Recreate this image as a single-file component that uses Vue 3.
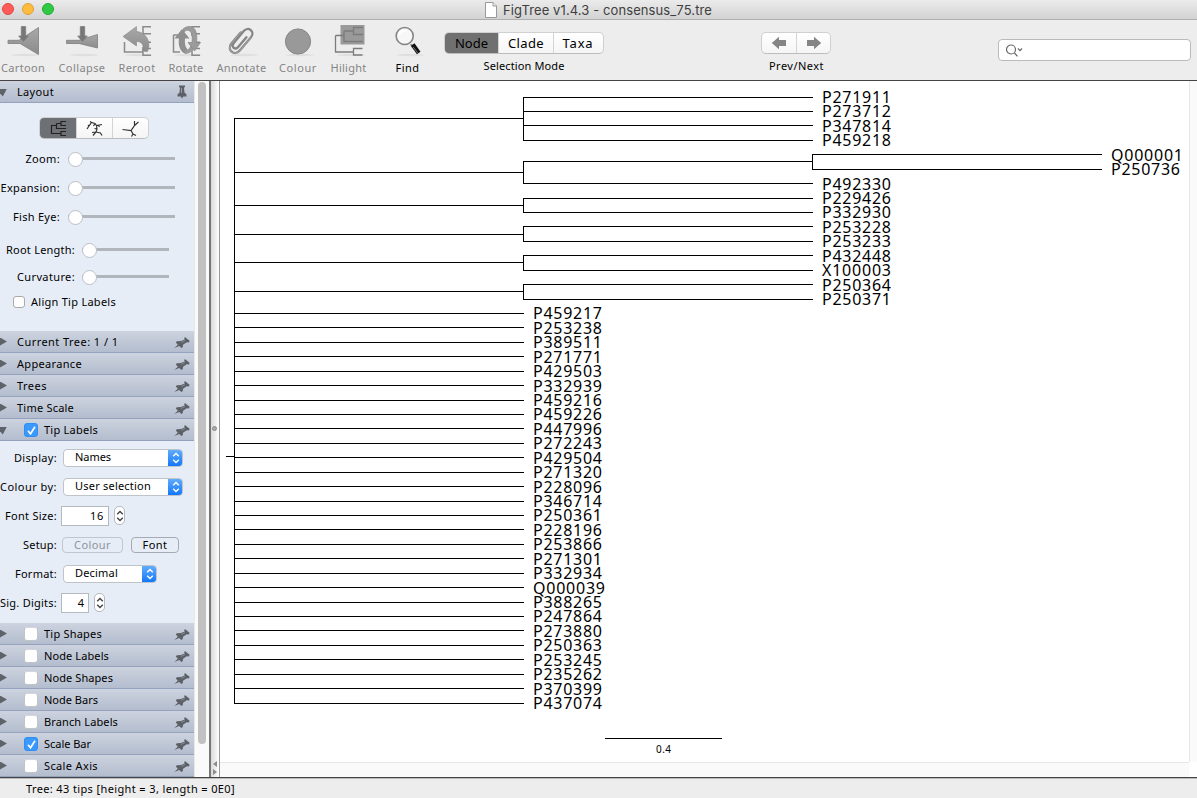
<script setup>
// Spreads a label's letters so that it takes up the given width in pixels.
const vFit = {
  mounted(el, { value }) {
    if (!value) return
    const width = el.getBoundingClientRect().width
    el.style.letterSpacing = (value - width) / el.textContent.length + 'px'
  },
}

const tools = [
  { name: 'Cartoon', w: 44 },
  { name: 'Collapse', w: 47 },
  { name: 'Reroot', w: 37 },
  { name: 'Rotate', w: 35 },
  { name: 'Annotate', w: 50 },
  { name: 'Colour', w: 38 },
  { name: 'Hilight', w: 36 },
  { name: 'Find', w: 24, on: true },
]

const closedTop = [
  { name: 'Current Tree: 1 / 1', w: 101.5 },
  { name: 'Appearance', w: 65 },
  { name: 'Trees', w: 30 },
  { name: 'Time Scale', w: 57 },
]
const closedBottom = [
  { name: 'Tip Shapes', w: 58 },
  { name: 'Node Labels', w: 65 },
  { name: 'Node Shapes', w: 69 },
  { name: 'Node Bars', w: 54 },
  { name: 'Branch Labels', w: 74 },
  { name: 'Scale Bar', w: 47, on: true },
  { name: 'Scale Axis', w: 54 },
]

const tips = (
  'P271911 P273712 P347814 P459218 Q000001 P250736 P492330 P229426 P332930 P253228 P253233 ' +
  'P432448 X100003 P250364 P250371 P459217 P253238 P389511 P271771 P429503 P332939 P459216 ' +
  'P459226 P447996 P272243 P429504 P271320 P228096 P346714 P250361 P228196 P253866 P271301 ' +
  'P332934 Q000039 P388265 P247864 P273880 P250363 P253245 P235262 P370399 P437074'
).split(' ')

const levels = [234, 523, 812, 1101]
const labelX = [0, 533, 822, 1111]
const depth = (i) => (i === 4 || i === 5 ? 3 : i < 15 ? 2 : 1)
const rawY = (i) => 97.02 + i * 14.43
const snap = (y) => Math.floor(y) + 0.5

const labels = tips.map((name, i) => ({
  name,
  x: labelX[depth(i)],
  y: Math.round(rawY(i) + 5.9),
  w: name[0] === 'Q' ? 72 : 69,
}))

const mid = (a, b) => (a + b) / 2
const pair = mid(rawY(4), rawY(5))
const clades = [
  { top: rawY(0), bottom: rawY(3) },
  { top: pair, bottom: rawY(6) },
  { top: rawY(7), bottom: rawY(8) },
  { top: rawY(9), bottom: rawY(10) },
  { top: rawY(11), bottom: rawY(12) },
  { top: rawY(13), bottom: rawY(14) },
]
const across = (level, y) => `M${levels[level - 1]} ${snap(y)}H${levels[level] + 1}`
const down = (level, a, b) => `M${levels[level] + 0.5} ${snap(a) - 0.5}V${snap(b) + 0.5}`
const branches = [
  ...tips.map((_, i) => across(depth(i), rawY(i))),
  ...clades.map((c) => across(1, mid(c.top, c.bottom)) + down(1, c.top, c.bottom)),
  across(2, pair),
  down(2, rawY(4), rawY(5)),
  down(0, mid(rawY(0), rawY(3)), rawY(42)),
  'M226 456.5H234',
].join('')
</script>

<template>
  <div class="window">
    <svg width="0" height="0" class="defs">
      <defs>
        <linearGradient id="g" x1="0" y1="0" x2="0" y2="1">
          <stop offset="0" stop-color="#a9a9a9" />
          <stop offset="1" stop-color="#8b8b8b" />
        </linearGradient>
        <symbol id="pin" viewBox="0 0 16 13">
          <path d="M0.300 12L3.800 8.800 1.800 6.500 2.800 5.200 7 5 10.800 3.400 10 2 11.200 1.200 15.600 4.800 15 6.400 12.800 6.200 9 8.800 8.800 11 7.400 12 5.200 9.900Z" fill="#5d6167" />
          <path d="M7.200 6.400L11 4.700" stroke="#8a9098" stroke-width=".9" />
        </symbol>
        <symbol id="updown" viewBox="0 0 8 12">
          <path d="M1.2 4.2L4 1.5 6.8 4.2M1.2 7.8L4 10.5 6.8 7.8" fill="none" stroke="currentColor" stroke-width="1.4" />
        </symbol>
      </defs>
    </svg>

    <header class="titlebar">
      <div class="lights"><i class="red"></i><i class="yellow"></i><i class="green"></i></div>
      <div class="title">
        <svg width="12" height="16" viewBox="0 0 12 16">
          <path d="M.5.5H8L11.5 4V15.5H.5Z" fill="#fff" stroke="#999" />
          <path d="M8 .5V4H11.5" fill="#eee" stroke="#999" />
        </svg>
        <span v-fit="209">FigTree v1.4.3 - consensus_75.tre</span>
      </div>
    </header>

    <div class="toolbar">
      <div v-for="t in tools" :key="t.name" class="tool" :class="{ on: t.on }">
        <svg width="36" height="36" viewBox="0 0 36 36" fill="none">
          <ellipse cx="20" cy="32" rx="14" ry="1.2" fill="#dfdfdf" />
          <g v-if="t.name === 'Cartoon'" fill="url(#g)" stroke="#7f7f7f" stroke-width=".8">
            <path d="M3 17.3H14L33.5 4.5V31.5L15 20.5H3Z" />
            <path d="M16.3 3.5H20.7V13H23.3L18.5 18.5 13.7 13H16.3Z" fill="#777" />
          </g>
          <g v-else-if="t.name === 'Collapse'" fill="url(#g)" stroke="#7f7f7f" stroke-width=".8">
            <path d="M2.5 17.3H15L33.5 11.5V25L15 20.5H2.5Z" />
            <path d="M16.3 3.5H20.7V13H23.3L18.5 18.5 13.7 13H16.3Z" fill="#777" />
          </g>
          <g v-else-if="t.name === 'Reroot'">
            <path d="M5.5 19V29H24M32 3.8H24V13M24 10.8H32M27 19.3H32M24 24V32.2H32M26 25.5H32" stroke="#8a8a8a" stroke-width="1.5" />
            <path d="M4 13.5L17.5 3.5V8.5C26 9 33 18 28.500 28.500 25 29 22 27 24 25 24.500 21 22 18.500 17.5 18.5V23Z" fill="url(#g)" stroke="#888" stroke-width=".6" />
          </g>
          <g v-else-if="t.name === 'Rotate'">
            <path d="M5.500 12V29H12M5.500 12H12M32 3.800H24V13M24 10.800H32M27 19.300H32M24 24V32.200H32M26 25.500H32" stroke="#8a8a8a" stroke-width="1.5" />
            <path d="M11 15.500H6.500L14 6 21.500 15.500H17C16.500 21 17.500 25.500 21 27.500L18 31C11.500 28.500 10 22 11 15.500Z" fill="#8f8f8f" />
            <path d="M18 31C23 30 25.500 27 26.500 24L23 21.500C22 25 20 27 16.500 27.500Z" fill="#9b9b9b" />
            <path d="M15 6C19 2.500 25 2.500 27.500 7.500 29 11 29 16 28.500 19.500H32.500L26.500 28 20 19.500H24C24.500 15 24.500 9 21 7.500 19 6.800 17.500 7.500 16 9Z" fill="#9b9b9b" stroke="#858585" stroke-width=".7" />
          </g>
          <g v-else-if="t.name === 'Annotate'" transform="translate(-2 0) rotate(40 18 18)" stroke-linecap="round">
            <path d="M13 11V25.500C13 33.500 24 33.500 24 25.500V8C24 1 14.500 1 14.500 8V23.500C14.500 28.500 20.500 28.500 20.500 23.500V11" stroke="#858585" stroke-width="2.300" />
            <path d="M13 11V25.500C13 33.500 24 33.500 24 25.500V8" stroke="#b0b0b0" stroke-width=".7" />
          </g>
          <circle v-else-if="t.name === 'Colour'" cx="18" cy="18.500" r="12.600" fill="#999" stroke="#878787" />
          <g v-else-if="t.name === 'Hilight'">
            <rect x="9.500" y="2" width="24" height="19.500" fill="#9a9a9a" />
            <path d="M4.500 12.500V29H14M4.500 12.500H13M13 8V18.500H31.500M13 8H22.500M32 4.500H22.500V11.500H32M14 29H22.500M31.500 25.500H22.500V32H31.500" stroke="#7c7c7c" stroke-width="1.300" />
          </g>
          <g v-else transform="translate(-.8 0)">
            <path d="M21.500 21L24 25" stroke="#999" stroke-width="2" />
            <path d="M23.500 21.500L29.500 30" stroke="#111" stroke-width="4.400" />
            <path d="M24 24L28.500 30" stroke="#777" stroke-width="1" />
            <circle cx="15.500" cy="13" r="8.500" fill="#f7f7f7" stroke="#858585" stroke-width="1.600" />
            <path d="M10 12C10.500 8.500 14 7 17 8" stroke="#fff" stroke-width="2" />
          </g>
        </svg>
        <span v-fit="t.w">{{ t.name }}</span>
      </div>

      <div class="group mode">
        <div class="segs">
          <b class="sel"><span v-fit="33">Node</span></b>
          <b><span v-fit="36">Clade</span></b>
          <b><span v-fit="31">Taxa</span></b>
        </div>
        <span v-fit="81">Selection Mode</span>
      </div>

      <div class="group nav">
        <div class="segs">
          <b><svg width="16" height="14" viewBox="0 0 16 14"><path d="M.8 7L8 .8V4H15V10H8V13.200Z" fill="#858585" /></svg></b>
          <b><svg width="16" height="14" viewBox="0 0 16 14"><path d="M15.200 7L8 .8V4H1V10H8V13.200Z" fill="#858585" /></svg></b>
        </div>
        <span v-fit="55">Prev/Next</span>
      </div>

      <div class="search">
        <svg width="18" height="14" viewBox="0 0 18 14" fill="none" stroke="#666" stroke-width="1.200">
          <circle cx="5" cy="5.500" r="4.500" />
          <path d="M8.500 9L11.500 12.300M12 4.500L14 6.600 16 4.500" />
        </svg>
      </div>
    </div>

    <main class="body">
      <aside class="panels">
        <div class="head">
          <i class="tri open"></i>
          <span v-fit="37" class="name">Layout</span>
          <svg class="pushpin" width="10" height="14" viewBox="0 0 10 14">
            <path d="M2 .5H8V2L7 2.800 7.500 7.500 9.500 9.500V11.500H6.300L5 13.500 3.700 11.500H.5V9.500L2.500 7.500 3 2.800 2 2Z" fill="#5d6167" />
            <path d="M4.500 3V8" stroke="#969ca4" />
          </svg>
        </div>
        <div class="content layout">
          <div class="segs views">
            <b class="sel">
              <svg width="18" height="17" viewBox="0 0 18 17" fill="none" stroke="#222" stroke-width="1.200"><path d="M7.500 5.500H2.500V13.500H11.500M7.500 3.500V8.500H17M7.500 3.500H12M17 1.500H12V5.500H17M17 11.500H12V15.500H17" /></svg>
            </b>
            <b>
              <svg width="18" height="17" viewBox="0 0 18 17" fill="none" stroke="#333" stroke-width="1.200"><path d="M1 9L3 6 5.500 2.500 9 3.500 10.500 5.500 16 4.500M3 6L2 5M5.500 2.500L4 1.500M12 5L13.500 7M9 3.500L7.500 6M10.500 5.500L11 9 10 12 7 15.500M10 12L14.500 13 16 15.500M10 12L6 12.500M11 9L8.500 8.500" /></svg>
            </b>
            <b>
              <svg width="18" height="17" viewBox="0 0 18 17" fill="none" stroke="#333" stroke-width="1.200"><path d="M.5 9.500L9 10.500 12.500 5.500V1M12.500 5.500L16.500 2M9 10.500L11 14 9.500 16.500M11 14L14 15.500" /></svg>
            </b>
          </div>
          <div class="row slide a"><label><span v-fit="34.500">Zoom:</span></label><i class="slider"></i></div>
          <div class="row slide a"><label><span v-fit="59.500">Expansion:</span></label><i class="slider"></i></div>
          <div class="row slide a"><label><span v-fit="47">Fish Eye:</span></label><i class="slider"></i></div>
          <div class="row slide b first"><label><span v-fit="69">Root Length:</span></label><i class="slider"></i></div>
          <div class="row slide b"><label><span v-fit="58">Curvature:</span></label><i class="slider"></i></div>
          <div class="row align"><i class="box small"></i><span v-fit="85">Align Tip Labels</span></div>
        </div>

        <div v-for="p in closedTop" :key="p.name" class="head">
          <i class="tri"></i>
          <span v-fit="p.w" class="name">{{ p.name }}</span>
          <svg class="pin" width="16" height="13"><use href="#pin" /></svg>
        </div>

        <div class="head">
          <i class="tri open"></i>
          <i class="box on"><svg width="13" height="13" viewBox="0 0 13 13"><path d="M3 6.800L5.500 9.800 10 2.800" fill="none" stroke="#fff" stroke-width="1.600" /></svg></i>
          <span v-fit="54" class="name">Tip Labels</span>
          <svg class="pin" width="16" height="13"><use href="#pin" /></svg>
        </div>
        <div class="content form">
          <div class="row">
            <label><span v-fit="43">Display:</span></label>
            <div class="combo"><span v-fit="36">Names</span><i><svg width="8" height="12"><use href="#updown" /></svg></i></div>
          </div>
          <div class="row">
            <label><span v-fit="57">Colour by:</span></label>
            <div class="combo"><span v-fit="76">User selection</span><i><svg width="8" height="12"><use href="#updown" /></svg></i></div>
          </div>
          <div class="row">
            <label><span v-fit="52">Font Size:</span></label>
            <div class="field"><span v-fit="14">16</span></div>
            <i class="spin"><svg width="8" height="14"><use href="#updown" /></svg></i>
          </div>
          <div class="row">
            <label><span v-fit="34">Setup:</span></label>
            <div class="btn off"><span v-fit="37">Colour</span></div>
            <div class="btn"><span v-fit="25">Font</span></div>
          </div>
          <div class="row">
            <label><span v-fit="42">Format:</span></label>
            <div class="combo short"><span v-fit="43">Decimal</span><i><svg width="8" height="12"><use href="#updown" /></svg></i></div>
          </div>
          <div class="row">
            <label><span v-fit="57">Sig. Digits:</span></label>
            <div class="field narrow"><span>4</span></div>
            <i class="spin"><svg width="8" height="14"><use href="#updown" /></svg></i>
          </div>
        </div>

        <div v-for="p in closedBottom" :key="p.name" class="head">
          <i class="tri"></i>
          <i class="box" :class="{ on: p.on }"><svg v-if="p.on" width="13" height="13" viewBox="0 0 13 13"><path d="M3 6.800L5.500 9.800 10 2.800" fill="none" stroke="#fff" stroke-width="1.600" /></svg></i>
          <span v-fit="p.w" class="name">{{ p.name }}</span>
          <svg class="pin" width="16" height="13"><use href="#pin" /></svg>
        </div>
      </aside>

      <div class="track"><i></i></div>
      <div class="divider">
        <i class="dot"></i>
        <svg width="6" height="16" viewBox="0 0 6 16" fill="#8b8b8b"><path d="M5 0V6L1 3ZM1 8V14L5 11Z" /></svg>
      </div>

      <section class="canvas">
        <svg width="969" height="681" viewBox="220 81 969 681">
          <path :d="branches" fill="none" stroke="#000" />
          <text v-for="l in labels" :key="l.name" class="tip" :x="l.x" :y="l.y" :textLength="l.w">{{ l.name }}</text>
          <path d="M605 738.500H722" stroke="#000" />
          <text class="scale" x="656" y="753" textLength="15">0.4</text>
        </svg>
        <i class="vbar"></i>
        <i class="hbar"></i>
      </section>
    </main>

    <footer class="status"><span v-fit="209">Tree: 43 tips [height = 3, length = 0E0]</span></footer>
  </div>
</template>

<style>
html, body { margin: 0; overflow: hidden; }
</style>

<style scoped>
.window {
  width: 1197px; height: 798px; display: flex; flex-direction: column; overflow: hidden;
  font: 11px/14px "Noto Sans", "Open Sans", sans-serif; color: #000; background: #ededed; white-space: nowrap;
}
.window * { box-sizing: border-box; }
.window svg { display: block; flex: none; }
.defs { position: absolute; }
span { display: inline-block; }
i { display: block; flex: none; }

.titlebar { height: 20px; display: flex; align-items: center; background: linear-gradient(#ebebeb, #d2d2d2); border-bottom: 1px solid #b0b0b0; }
.lights { display: flex; gap: 8px; padding-left: 2px; width: 485px; margin-top: -1px; }
.lights i { width: 12px; height: 12px; border-radius: 50%; }
.red { background: #fc5b57; border: 1px solid #e14942; }
.yellow { background: #fdbc40; border: 1px solid #e0a033; }
.green { background: #2fc945; border: 1px solid #1fad34; }
.title { display: flex; gap: 6px; align-items: center; font: 13px/16px Inter, "Open Sans", sans-serif; color: #404040; }
.title span { margin-top: 1px; }

.toolbar { height: 60px; display: grid; grid-template-columns: 46px 72px 38px 60px 51px 62px 39px 78px 155px 390px 206px; }
.tool, .group { display: flex; flex-direction: column; align-items: center; }
.tool { color: #858585; padding-top: 3px; }
.tool.on { color: #000; padding-left: 1px; }
.tool > span { margin-top: 2px; }
.group { padding-top: 12px; }
.group > span { margin: 5px 0 0 1px; }
.segs { display: flex; height: 22px; background: linear-gradient(#fff, #f5f5f5); border: 1px solid #d0d0d0; border-bottom-color: #bcbcbc; border-radius: 5px; overflow: hidden; }
.segs b { display: flex; align-items: center; justify-content: center; font-weight: normal; font-size: 13px; border-left: 1px solid #d4d4d4; }
.segs b:first-child { border-left: 0; }
.segs .sel { background: #707070; margin: -1px 0 -1px -1px; }
.mode .segs b { width: 50px; }
.mode .segs .sel { width: 54px; padding-left: 2px; }
.mode .segs b:nth-child(2) { width: 55px; padding-left: 1px; }
.nav .segs b { width: 34px; }
.search { width: 193px; height: 22px; margin: 19px 0 0 7px; background: #fff; border: 1px solid #bababa; border-radius: 4px; padding: 4px 7px; }

.body { height: 698px; display: flex; border-top: 1px solid #444; border-bottom: 1px solid #444; }
.panels { width: 194px; height: 696px; overflow: hidden; background: #e6edf7; }
.head { height: 22px; display: flex; align-items: center; background: linear-gradient(#cdd3df, #b3bdce); border-bottom: 1px solid #95a2bd; }
.tri { width: 7px; height: 8px; margin-right: 10px; background: #5e6369; clip-path: polygon(0 0, 100% 50%, 0 100%); }
.tri.open { margin-top: 2px; clip-path: polygon(0 0, 100% 0, 40% 100%, 0 60%); }
.tri + .box { margin: 0 6px 0 7px; }
.name { margin-right: auto; }
.pin { margin: 1px 4px 0 0; }
.pushpin { margin-right: 7px; }
.box { width: 14px; height: 14px; background: #fff; border: 1px solid #c2c4c8; border-top-color: #d4d6da; border-radius: 3px; }
.box.on { background: #3b99fc; border-color: #2f8df5; }
.box.small { width: 12px; height: 12px; border-color: #aaa; }

.layout { height: 228px; padding-top: 14px; }
.views { width: 110px; margin: 0 0 5px 39px; }
.views b { width: 36px; }
.views .sel { width: 37px; background: #6d7075; }
.row { display: flex; align-items: center; height: 29px; }
.row label { display: flex; justify-content: flex-end; flex: none; }
.slide.a label { width: 60px; margin-right: 8px; }
.slide.b label { width: 75px; margin-right: 7px; }
.slide.b, .slide.first { height: 27px; }
.slide.first { margin-top: 5px; }
.slider { width: 107px; height: 13px; position: relative; background: linear-gradient(#b1b5bc, #b1b5bc) 0 5px / 100% 3px no-repeat; border-radius: 2px; }
.slide.b .slider { width: 87px; }
.slider::before { content: ""; position: absolute; left: 0; top: 0; width: 13px; height: 13px; border-radius: 50%; background: #fff; border: 1px solid #bbbfc6; }
.align { height: 22px; margin-top: 1px; padding-left: 13px; gap: 6px; }

.form { height: 182px; padding-top: 2px; }
.form label { width: 57px; margin-right: 6px; }
.combo { width: 120px; height: 18px; display: flex; justify-content: space-between; padding-left: 11px; background: #fff; border: 1px solid #bfc3ca; border-radius: 4px; overflow: hidden; }
.combo i { width: 15px; height: 18px; margin: -1px -1px 0 0; padding: 3px 0 0 4px; color: #fff; background: linear-gradient(#65b0fc, #0f74fb); }
.combo.short { width: 94px; }
.field { width: 48px; height: 20px; margin-left: -2px; padding: 2px 4px; text-align: right; background: #fff; border: 1px solid #b5b9c0; }
.field.narrow { width: 28px; }
.spin { width: 11px; height: 19px; margin-left: 5px; padding: 2px 0 0 1px; background: #fff; border: 1px solid #b5b9c0; border-radius: 5px; color: #444; }
.btn { width: 48px; height: 16px; display: flex; align-items: center; justify-content: center; border: 1px solid #a6abb3; border-radius: 4px; }
.btn.off { width: 61px; margin: 0 8px 0 -1px; color: #8f939a; border-color: #c0c5ce; }

.track { width: 15px; height: 696px; background: #fafafa; border-left: 1px solid #e8e8e8; padding: 1px 0 0 3px; }
.track i { width: 8px; height: 662px; border-radius: 4px; background: #c1c1c1; }
.divider { width: 11px; height: 696px; border-left: 2px solid #777; border-right: 1px solid #999; background: linear-gradient(90deg, #dadada, #fff); display: flex; flex-direction: column; align-items: center; justify-content: space-between; padding-right: 1px; }
.dot { width: 5px; height: 5px; margin-top: 345px; border-radius: 50%; background: #aaa; border: 1px solid #888; }
.canvas { flex: 1; height: 696px; display: grid; grid-template: 681px 15px / 969px 8px; background: #fff; }
.vbar { background: #fafafa; border-left: 1px solid #e6e6e6; }
.hbar { background: #fafafa; border-top: 1px solid #e6e6e6; }
.tip { font-size: 16px; }
.scale { font-size: 10px; }
.status { height: 20px; padding: 3px 0 0 26px; border-top: 1px solid #bbb; background: #ededed; }
</style>
